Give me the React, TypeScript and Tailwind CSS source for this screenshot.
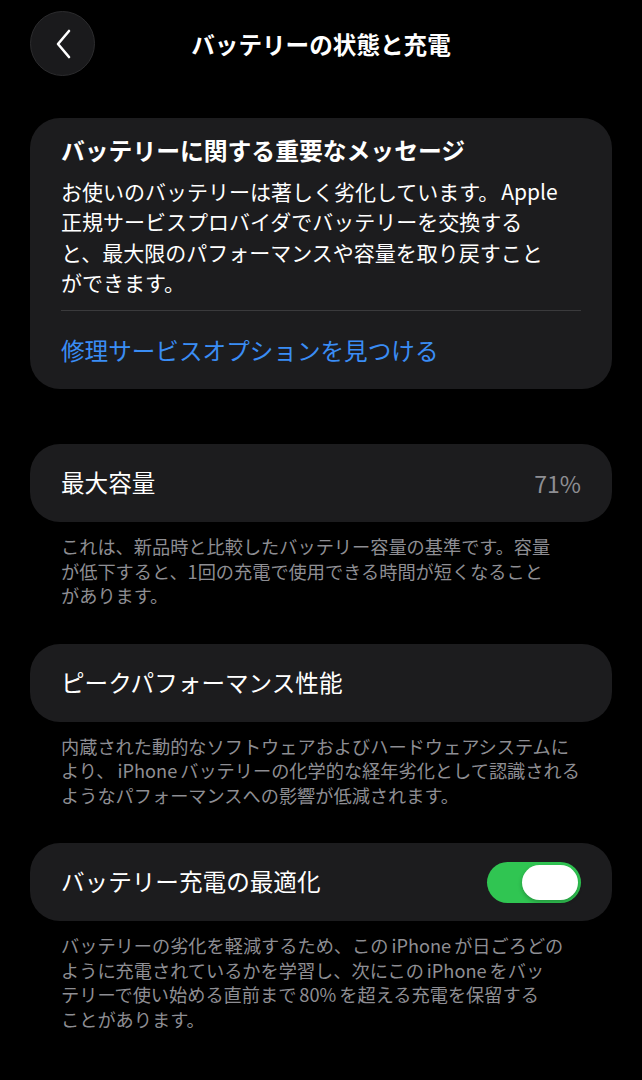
import { useState } from "react"

const font = "font-['Noto_Sans_CJK_JP','Noto_Sans',sans-serif]"

function Caption({ children }: { children: React.ReactNode }) {
  return (
    <p className="mt-[12px] px-[31px] text-[18.2px] leading-[24.5px] text-[#8e8e93] whitespace-nowrap">
      {children}
    </p>
  )
}

function Row({ children }: { children: React.ReactNode }) {
  return (
    <div className="flex h-[78px] items-center justify-between rounded-[30px] bg-[#1c1c1e] pl-[31px] pr-[31px]">
      {children}
    </div>
  )
}

// iOS puts a little air around Latin words inside Japanese text
function Latin({ children }: { children: React.ReactNode }) {
  return <span className="mx-[3px]">{children}</span>
}

export default function App() {
  const [optimized, setOptimized] = useState(true)

  return (
    <div className={`${font} h-[1080px] w-[642px] overflow-hidden bg-black text-white`}>
      {/* Nav bar */}
      <header className="flex items-center px-[30px] pt-[11px]">
        <button
          type="button"
          aria-label="戻る"
          className="flex size-[65px] shrink-0 items-center justify-center rounded-full border border-[#2c2c2e] bg-[#1a1a1c]"
        >
          <svg width="20" height="30" viewBox="0 0 20 30" fill="none">
            <path d="M16 2 L5 15 L16 28" stroke="white" strokeWidth="2.6" strokeLinecap="round" strokeLinejoin="round" />
          </svg>
        </button>
        <h1 className="flex-1 text-center text-[23.6px] font-semibold leading-[32px]">バッテリーの状態と充電</h1>
        <div className="size-[65px] shrink-0" />
      </header>

      <main className="px-[30px]">
        {/* Important message */}
        <section className="mt-[42px] rounded-[30px] bg-[#1c1c1e] px-[31px] pt-[16px] pb-[23px]">
          <h2 className="text-[23.8px] font-bold leading-[32px] whitespace-nowrap">バッテリーに関する重要なメッセージ</h2>
          <p className="mt-[10px] text-[21px] leading-[30.3px] whitespace-nowrap">
            <span className="block">
              お使いのバッテリーは著しく劣化しています。<span className="ml-[2px]">Apple</span>
            </span>
            <span className="block">正規サービスプロバイダでバッテリーを交換する</span>
            <span className="block">と、最大限のパフォーマンスや容量を取り戻すこと</span>
            <span className="block">ができます。</span>
          </p>
          <div className="mt-[13px] h-px bg-[#3a3a3c]" />
          <a href="#" className="mt-[23px] block text-[23.6px] leading-[32px] text-[#3a8df5]">
            修理サービスオプションを見つける
          </a>
        </section>

        {/* Maximum capacity */}
        <section className="mt-[55px]">
          <Row>
            <span className="text-[23.6px]">最大容量</span>
            <span className="text-[23px] text-[#8e8e93]">71%</span>
          </Row>
          <Caption>
            <span className="block">これは、新品時と比較したバッテリー容量の基準です。容量</span>
            <span className="block">が低下すると、1回の充電で使用できる時間が短くなること</span>
            <span className="block">があります。</span>
          </Caption>
        </section>

        {/* Peak performance */}
        <section className="mt-[36px]">
          <Row>
            <span className="text-[23.6px]">ピークパフォーマンス性能</span>
          </Row>
          <Caption>
            <span className="block">内蔵された動的なソフトウェアおよびハードウェアシステムに</span>
            <span className="block">
              より、<Latin>iPhone</Latin>バッテリーの化学的な経年劣化として認識される
            </span>
            <span className="block">ようなパフォーマンスへの影響が低減されます。</span>
          </Caption>
        </section>

        {/* Optimized charging */}
        <section className="mt-[36px]">
          <Row>
            <span className="text-[23.6px]">バッテリー充電の最適化</span>
            <button
              type="button"
              role="switch"
              aria-checked={optimized}
              onClick={() => setOptimized((v) => !v)}
              className={`flex h-[41px] w-[94px] items-center rounded-full p-[3px] ${
                optimized ? "justify-end bg-[#30c552]" : "justify-start bg-[#39393d]"
              }`}
            >
              <span className="h-[35px] w-[56px] rounded-full bg-white shadow-[0_2px_4px_rgba(0,0,0,0.25)]" />
            </button>
          </Row>
          <Caption>
            <span className="block">
              バッテリーの劣化を軽減するため、この<Latin>iPhone</Latin>が日ごろどの
            </span>
            <span className="block">
              ように充電されているかを学習し、次にこの<Latin>iPhone</Latin>をバッ
            </span>
            <span className="block">
              テリーで使い始める直前まで<Latin>80%</Latin>を超える充電を保留する
            </span>
            <span className="block">ことがあります。</span>
          </Caption>
        </section>
      </main>
    </div>
  )
}
